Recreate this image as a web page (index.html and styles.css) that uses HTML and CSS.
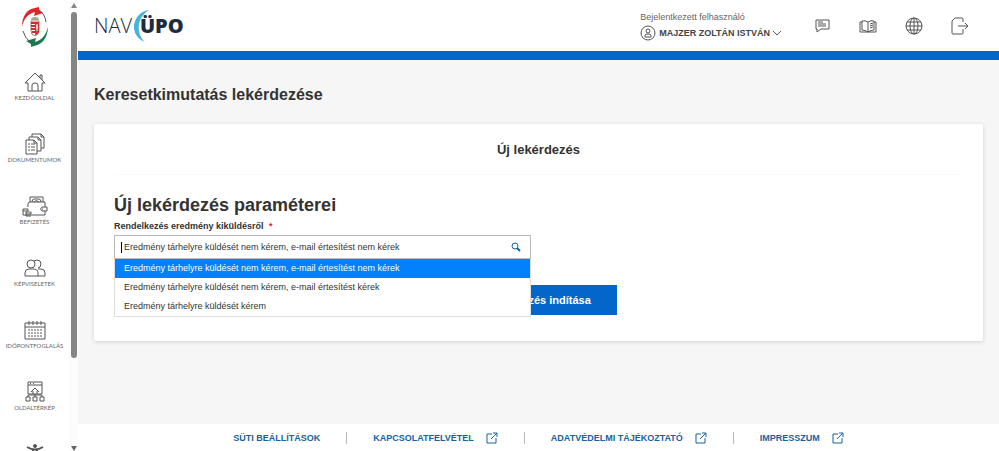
FILE: index.html
```html
<!DOCTYPE html>
<html lang="hu">
<head>
    <meta charset="UTF-8">
    <meta name="viewport" content="width=device-width, initial-scale=1.0">
    <title>NAV ÜPO - Keresetkimutatás lekérdezése</title>

    <link rel="stylesheet" href="styles.css">
</head>
<body>
    <aside class="sidebar">
        <nav class="menu">
            <a class="crest" href="#" aria-label="NAV">
                <svg width="28" height="40" viewBox="0 0 28 40">
                    <path d="M1 20C1 9 6 2 14 1L18 0L18 3L22 6L13 9L14 5C7 7 3 11 1 20Z" fill="#e0262b"/>
                    <path d="M18 3Q24 7 25 15" stroke="#555"/>
                    <path d="M27 20C27 30 21 38 13 39L10 40L10 37L5 34L15 31L14 35C21 33 25 28 27 20Z" fill="#1d7a50"/>
                    <path d="M2 24Q4 31 9 35" stroke="#555"/>
                    <path d="M10 14H18V24Q18 28 14 29Q10 28 10 24Z" fill="#fff" stroke="#9b8264"/>
                    <path d="M10 16H14M10 19H14M10 22H14M11 25H14" stroke="#d8262c" stroke-width="2"/>
                    <path d="M14 15H18V24Q18 27 14 28Z" fill="#cf3434"/>
                    <path d="M16 17V24M15 19H17M15 21H17" stroke="#fff"/>
                    <path d="M10 13Q10 10 14 10Q18 10 18 13Z" fill="#b5a184"/>
                </svg>
            </a>
            <a class="item" href="#">
                <svg class="ico" viewBox="0 0 22 22">
                    <path d="M1 12L11 2L21 12H18V20H4V12ZM8 20V14Q8 12 11 12Q14 12 14 14V20M16 7V4H18V9"/>
                </svg>
                KEZDŐOLDAL
            </a>
            <a class="item" href="#">
                <svg class="ico" viewBox="0 0 22 22">
                    <path d="M2 7H10L13 10V21H2ZM10 7V10H13M5 7V4H14L17 7V18H13M14 4V7H17M8 4V1H17L20 4V15H17M17 1V4H20M4 11H6M7 11H11M4 14H6M7 14H11M4 17H6M7 17H11"/>
                </svg>
                DOKUMENTUMOK
            </a>
            <a class="item" href="#">
                <svg class="ico wide" viewBox="0 0 26 22">
                    <path d="M6 12V9Q6 7 8 7H23V12M23 16V20H10M8 7V2H21V7M10 7Q10 4 12 4H17Q19 4 19 7M12 7Q14 4 17 7M25 12H20Q17 14 20 16H25ZM1 14H6V16H1ZM1 16V20H8M4 17H9V21H4ZM4 19H9M20 14H21"/>
                </svg>
                BEFIZETÉS
            </a>
            <a class="item" href="#">
                <svg class="ico" viewBox="0 0 22 22">
                    <circle cx="7" cy="7" r="4"/>
                    <path d="M1 19V16Q1 12 5 12H9Q14 12 14 16V19ZM10 4Q13 2 16 4Q18 7 16 10L14 11M14 12H17Q21 12 21 16V19H14"/>
                </svg>
                KÉPVISELETEK
            </a>
            <a class="item" href="#">
                <svg class="ico" viewBox="0 0 22 22">
                    <path d="M1 4H21V20H1ZM1 8H21M5 2V6M9 2V6M13 2V6M17 2V6"/>
                    <path d="M4 11H19M4 14H19M4 17H19" stroke-dasharray="2 1"/>
                </svg>
                IDŐPONTFOGLALÁS
            </a>
            <a class="item" href="#">
                <svg class="ico" viewBox="0 0 22 22">
                    <path d="M4 1H18V13H4ZM4 4H18M6 2.500H7M9 2.500H10M7 11L11 7L15 11M9 10V13M13 10V13M11 13V16M4 16V14H18V16M2 16H6V20H2ZM9 16H13V20H9ZM16 16H20V20H16Z"/>
                </svg>
                OLDALTÉRKÉP
            </a>
            <a class="item" href="#" aria-label="Akadálymentesítés">
                <svg class="ico" viewBox="0 0 22 22">
                    <circle cx="11" cy="3" r="1.500" fill="#555"/>
                    <path d="M3 4Q11 9 19 4M9 7V12L6 20M13 7V12L16 20" stroke-width="2"/>
                </svg>
            </a>
        </nav>
        <div class="scrollbar">
            <span class="arrow up"></span>
            <span class="thumb"></span>
            <span class="arrow down"></span>
        </div>
    </aside>

    <div class="page">
        <header class="header">
            <a class="brand" href="#" aria-label="NAV ÜPO">
                <span class="nav-text">NAV</span>
                <svg class="arc" width="18" height="32" viewBox="0 0 18 32">
                    <path d="M17 0C1 2 -5 25 13 32C4 24 4 8 17 0Z" fill="#45b1dd"/>
                </svg>
                <span class="upo-text">ÜPO</span>
            </a>

            <div class="user">
                <span class="user-label">Bejelentkezett felhasználó</span>
                <button class="user-name" type="button">
                    <svg width="16" height="16" viewBox="0 0 16 16">
                        <circle cx="8" cy="8" r="7"/>
                        <circle cx="8" cy="6" r="2"/>
                        <path d="M5 12V11Q5 9 7 9H9Q11 9 11 11V12Z"/>
                    </svg>
                    MAJZER ZOLTÁN ISTVÁN
                    <svg class="chevron" width="8" height="6" viewBox="0 0 8 6"><path d="M0 1L4 5L8 1"/></svg>
                </button>
            </div>

            <div class="tools">
                <button type="button" aria-label="Üzenetek">
                    <svg width="18" height="18" viewBox="0 0 18 18">
                        <path d="M3 3H16V12H8L4 15V12H3ZM5 5H10M5 7H13M5 9H13"/>
                    </svg>
                </button>
                <button type="button" aria-label="Útmutató">
                    <svg width="18" height="18" viewBox="0 0 18 18">
                        <path d="M9 5Q6 3 3 4V13Q6 13 9 15Q12 13 15 13V4Q12 3 9 5V15M3 5H1V15H17V5H15M11 7L14 6M11 9L14 8M11 11L14 10"/>
                    </svg>
                </button>
                <button type="button" aria-label="Nyelv">
                    <svg width="18" height="18" viewBox="0 0 18 18">
                        <circle cx="9" cy="9" r="8"/>
                        <ellipse cx="9" cy="9" rx="4" ry="8"/>
                        <path d="M9 1V17M1 9H17M2 5H16M2 13H16"/>
                    </svg>
                </button>
                <button type="button" aria-label="Kilépés">
                    <svg class="exit" width="20" height="20" viewBox="0 0 20 20">
                        <path d="M13 6V3Q13 2 12 2H5L2 5V17Q2 18 3 18H12Q13 18 13 17V13M8 10H18M15 7L18 10L15 13"/>
                    </svg>
                </button>
            </div>
        </header>

        <main class="content">
            <h1>Keresetkimutatás lekérdezése</h1>

            <section class="card">
                <h2 class="card-title">Új lekérdezés</h2>

                <form class="query">
                    <h3>Új lekérdezés paraméterei</h3>
                    <label for="disposition">Rendelkezés eredmény kiküldésről <span class="required">*</span></label>

                    <div class="combo">
                        <div class="combo-box">
                            <span class="caret"></span>
                            <input type="text" id="disposition" role="combobox" aria-expanded="true" aria-controls="options" value="Eredmény tárhelyre küldését nem kérem, e-mail értesítést nem kérek">
                            <svg class="search" width="10" height="10" viewBox="0 0 10 10">
                                <circle cx="4" cy="4" r="3"/>
                                <path d="M6 6L9 9"/>
                            </svg>
                        </div>
                        <ul class="options" id="options" role="listbox">
                            <li class="selected" role="option" aria-selected="true">Eredmény tárhelyre küldését nem kérem, e-mail értesítést nem kérek</li>
                            <li role="option">Eredmény tárhelyre küldését nem kérem, e-mail értesítést kérek</li>
                            <li role="option">Eredmény tárhelyre küldését kérem</li>
                        </ul>
                    </div>

                    <button class="submit" type="button">Lekérdezés indítása</button>
                </form>
            </section>
        </main>

        <footer class="footer">
            <a href="#">SÜTI BEÁLLÍTÁSOK</a>
            <a href="#">KAPCSOLATFELVÉTEL
                <svg width="12" height="12" viewBox="0 0 12 12"><path d="M6 2H1V11H10V6M5 7L11 1M7 1H11V5"/></svg>
            </a>
            <a href="#">ADATVÉDELMI TÁJÉKOZTATÓ
                <svg width="12" height="12" viewBox="0 0 12 12"><path d="M6 2H1V11H10V6M5 7L11 1M7 1H11V5"/></svg>
            </a>
            <a href="#">IMPRESSZUM
                <svg width="12" height="12" viewBox="0 0 12 12"><path d="M6 2H1V11H10V6M5 7L11 1M7 1H11V5"/></svg>
            </a>
        </footer>
    </div>
</body>
</html>
```

FILE: styles.css
```css
*{
    margin: 0;
    padding: 0;
    box-sizing: border-box;
}

:root{
    --blue: #0466cb;
    --link: #1463a5;
    --text: #333;
    --icon: #555;
}

body{
    display: flex;
    height: 100vh;
    overflow: hidden;
    background: #f6f6f6;
    color: var(--text);
    font-family: 'Liberation Sans', Arial, sans-serif;
    font-size: 9px;
}

a{
    color: inherit;
    text-decoration: none;
}

button{
    border: 0;
    background: none;
    color: inherit;
    font: inherit;
    cursor: pointer;
}

svg{
    flex: none;
    fill: none;
}

/* sidebar */
.sidebar{
    display: flex;
    flex: none;
    width: 78px;
    overflow: hidden;
    background: #fff;
}

.menu{
    flex: 1;
    min-width: 0;
}

.crest{
    display: flex;
    justify-content: center;
    height: 71px;
    padding-top: 7px;
}

.item{
    display: flex;
    flex-direction: column;
    align-items: center;
    height: 62px;
    color: #666;
    font-family: Lato, sans-serif;
    font-size: 6px;
    line-height: 10px;
    white-space: nowrap;
}

.ico{
    width: 22px;
    height: 22px;
    stroke: var(--icon);
}

.wide{
    width: 26px;
}

.scrollbar{
    display: flex;
    flex-direction: column;
    align-items: center;
    width: 9px;
    padding: 3px 0 0;
    background: #fcfcfc;
}

.thumb{
    flex: 1;
    width: 6px;
    margin: 4px 0 88px;
    border-radius: 3px;
    background: #858585;
}

.arrow{
    border: 3px solid transparent;
}

.up{
    border-top: 0;
    border-bottom: 5px solid #858585;
}

.down{
    border-top: 5px solid #666;
    border-bottom: 0;
}

/* header */
.page{
    display: flex;
    flex: 1;
    flex-direction: column;
    min-width: 0;
}

.header{
    display: flex;
    align-items: center;
    height: 60px;
    padding: 0 16px;
    border-bottom: 9px solid var(--blue);
    background: #fff;
}

.brand{
    display: flex;
    align-items: center;
    margin-right: auto;
    color: #1d2c40;
}

.nav-text{
    font: 300 20px/32px 'Open Sans', sans-serif;
}

.arc{
    margin-right: -10px;
}

.upo-text{
    font: 800 20px/32px 'Open Sans', sans-serif;
}

.user{
    display: flex;
    flex-direction: column;
    gap: 2px;
    margin-right: 18px;
}

.user-label{
    color: #666;
    line-height: 12px;
}

.user-name{
    display: flex;
    align-items: center;
    gap: 3px;
    color: #444;
    font-weight: bold;
}

.user-name svg,
.tools svg{
    stroke: var(--icon);
}

.tools{
    display: flex;
}

.tools button{
    display: flex;
    align-items: center;
    justify-content: center;
    width: 46px;
}

/* content */
.content{
    flex: 1;
    padding: 24px 16px;
}

h1{
    margin-bottom: 18px;
    font-size: 16px;
    line-height: 22px;
}

.card{
    padding: 0 20px 26px;
    border-radius: 2px;
    background: #fff;
    box-shadow: 0 1px 4px rgba(0, 0, 0, .15);
}

.card-title{
    padding: 16px 0 14px;
    border-bottom: 1px solid #fafafa;
    font-size: 13px;
    line-height: 20px;
    text-align: center;
}

.query{
    padding-top: 18px;
}

h3{
    font-size: 18px;
    line-height: 24px;
}

.query label{
    display: block;
    font-weight: bold;
    line-height: 18px;
}

.required{
    margin-left: 3px;
    color: #d8262c;
}

.combo{
    position: relative;
    max-width: 417px;
}

.combo-box{
    display: flex;
    align-items: center;
    height: 24px;
    padding: 0 9px 0 6px;
    border: 1px solid #bbb;
}

.caret{
    width: 1px;
    height: 11px;
    margin-right: 2px;
    background: #000;
}

.combo input{
    flex: 1;
    min-width: 0;
    border: 0;
    outline: 0;
    background: none;
    color: var(--text);
    font: inherit;
}

.search{
    stroke: var(--link);
}

.search circle{
    stroke-width: 1;
}

.search path{
    stroke-width: 2;
}

/* open list covers the left half of the submit button */
.options{
    position: absolute;
    top: 100%;
    left: 0;
    right: 0;
    border: 1px solid #ddd;
    border-top: 0;
    background: #fff;
    list-style: none;
}

.options li{
    padding: 0 9px;
    line-height: 19px;
}

.options .selected{
    background: #0380fb;
    color: #fff;
}

.submit{
    display: block;
    margin: 26px auto 0;
    padding: 0 26px;
    background: var(--blue);
    color: #fff;
    font-size: 11px;
    font-weight: bold;
    line-height: 30px;
}

/* footer */
.footer{
    display: flex;
    align-items: center;
    justify-content: center;
    height: 27px;
    background: #fff;
    color: var(--link);
    font-weight: bold;
}

.footer a{
    display: flex;
    align-items: center;
    gap: 12px;
    padding: 0 26px;
    line-height: 12px;
}

.footer a + a{
    border-left: 1px solid #bbb;
}

.footer svg{
    stroke: var(--link);
}
```
